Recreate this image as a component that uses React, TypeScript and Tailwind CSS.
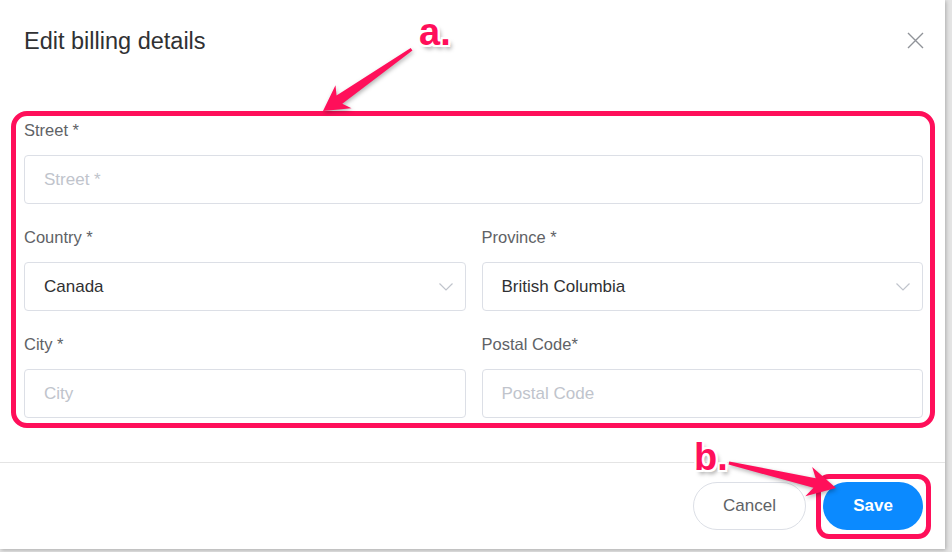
import React from "react";

function XIcon() {
  return (
    <svg width="17" height="17" viewBox="0 0 17 17" className="shrink-0">
      <path d="M1 1 L16 16 M16 1 L1 16" stroke="#909399" strokeWidth="1.4" fill="none" />
    </svg>
  );
}

function Chevron() {
  return (
    <svg width="14" height="8" viewBox="0 0 14 8" className="shrink-0">
      <polyline points="0.5,0.5 7,7 13.5,0.5" stroke="#c0c4cc" strokeWidth="1.2" fill="none" />
    </svg>
  );
}

function Label({ children }: { children: React.ReactNode }) {
  return <div className="h-[24px] leading-[24px] text-[16.5px] text-[#606266] mb-[14px] pt-px">{children}</div>;
}

function TextInput({ placeholder }: { placeholder: string }) {
  return (
    <div className="h-[49px] border border-[#dcdfe6] rounded-[4px] flex items-center pl-[19px] text-[17px] text-[#c0c4cc]">
      {placeholder}
    </div>
  );
}

function Select({ value }: { value: string }) {
  return (
    <div className="h-[49px] border border-[#dcdfe6] rounded-[4px] flex items-center justify-between pl-[19px] pr-[12px] text-[17px] text-[#303133]">
      <span>{value}</span>
      <Chevron />
    </div>
  );
}

export default function App() {
  return (
    <div className="w-[952px] h-[552px] bg-[#e4e4e4] overflow-hidden font-['Liberation_Sans',Arial,sans-serif]">
      <div className="relative w-[945px] h-[549px] bg-white flex flex-col shadow-[1px_1px_4px_rgba(0,0,0,0.25)]">
        <header className="flex items-center justify-between pl-6 pr-[21px] pt-6 h-[56px]">
          <h2 className="text-[23.5px] leading-[32px] text-[#303133] pt-px">Edit billing details</h2>
          <XIcon />
        </header>

        <div className="flex-1 pl-6 pr-[22px] pt-[61px] flex flex-col gap-5">
          <div>
            <Label>Street *</Label>
            <TextInput placeholder="Street *" />
          </div>
          <div className="grid grid-cols-2 gap-x-4 gap-y-5">
            <div>
              <Label>Country *</Label>
              <Select value="Canada" />
            </div>
            <div>
              <Label>Province *</Label>
              <Select value="British Columbia" />
            </div>
            <div>
              <Label>City *</Label>
              <TextInput placeholder="City" />
            </div>
            <div>
              <Label>Postal Code*</Label>
              <TextInput placeholder="Postal Code" />
            </div>
          </div>
        </div>

        <footer className="h-[87px] border-t border-[#e4e4e4] flex items-center justify-end gap-[17px] pr-[22px]">
          <button className="w-[113px] h-[48px] rounded-full border border-[#dcdfe6] bg-white text-[17px] text-[#606266]">
            Cancel
          </button>
          <button className="w-[100px] h-[48px] rounded-full bg-[#0b8aff] text-[17px] font-semibold text-white">
            Save
          </button>
        </footer>

        {/* annotation overlays */}
        <div className="absolute left-[11px] top-[111px] w-[924px] h-[317px] border-[5px] border-[#ff0f5a] rounded-[16px] pointer-events-none" />
        <div className="absolute left-[816px] top-[474px] w-[115px] h-[65px] border-[5px] border-[#ff0f5a] rounded-[13px] pointer-events-none" />

        <svg
          className="absolute left-0 top-0 pointer-events-none drop-shadow-[1px_2px_2px_rgba(0,0,0,0.3)]"
          width="945"
          height="549"
          viewBox="0 0 945 549"
        >
          <g transform="translate(323 111) rotate(145.1)">
            <polygon points="0,0 -25,-14 -20,-5 -108,-1.5 -108,1.5 -20,5 -25,14" fill="#ff0f5a" />
          </g>
          <g transform="translate(836 488) rotate(13.15)">
            <polygon points="0,0 -28,-15 -22,-5 -110,-1.5 -110,1.5 -22,5 -28,15" fill="#ff0f5a" />
          </g>
        </svg>

        <div className="absolute left-[419px] top-[8px] text-[38px] leading-[48px] font-bold text-[#ff0f5a] [text-shadow:-2px_-2px_0_#fff,2px_-2px_0_#fff,-2px_2px_0_#fff,2px_2px_0_#fff,0_2px_0_#fff,0_-2px_0_#fff,2px_0_0_#fff,-2px_0_0_#fff,3px_4px_4px_rgba(0,0,0,0.35)] pointer-events-none">
          a.
        </div>
        <div className="absolute left-[694px] top-[433px] text-[38px] leading-[48px] font-bold text-[#ff0f5a] [text-shadow:-2px_-2px_0_#fff,2px_-2px_0_#fff,-2px_2px_0_#fff,2px_2px_0_#fff,0_2px_0_#fff,0_-2px_0_#fff,2px_0_0_#fff,-2px_0_0_#fff,3px_4px_4px_rgba(0,0,0,0.35)] pointer-events-none">
          b.
        </div>
      </div>
    </div>
  );
}
